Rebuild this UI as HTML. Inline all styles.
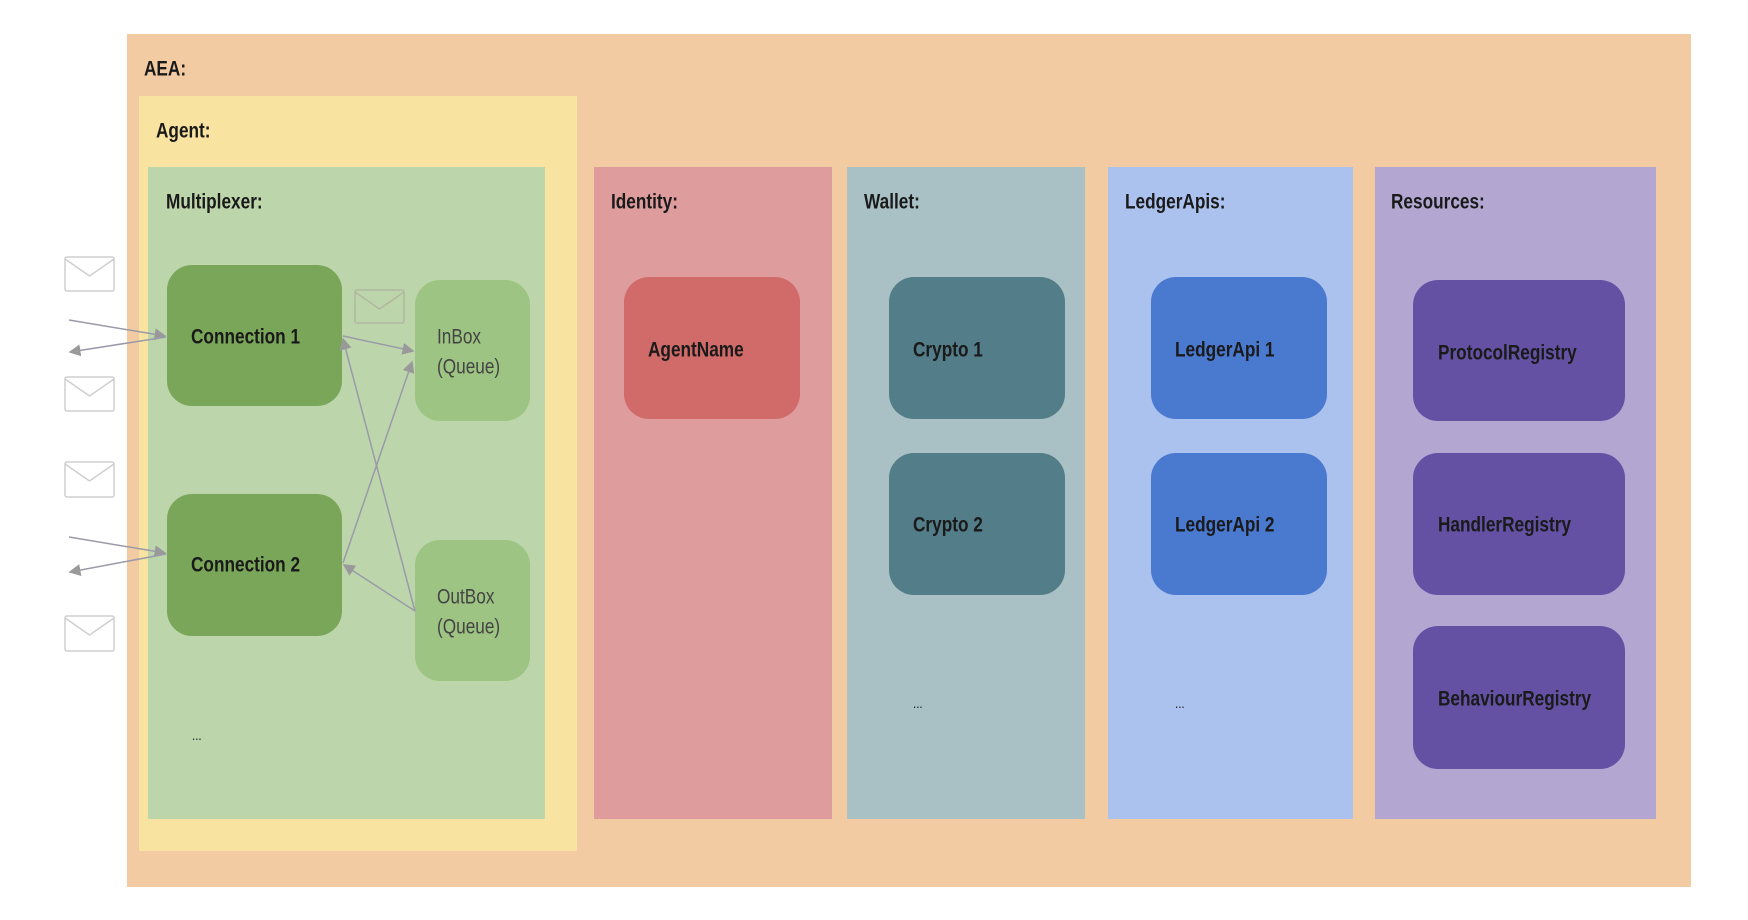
<!DOCTYPE html>
<html><head><meta charset="utf-8"><style>
body{margin:0;width:1748px;height:920px;background:#fff;position:relative;overflow:hidden;font-family:"Liberation Sans Narrow","Liberation Sans",sans-serif;}
div{position:absolute;box-sizing:border-box;}
.t{font-size:21px;color:#1a1a1a;white-space:nowrap;line-height:1;transform:translateY(-50%) scaleX(0.82);transform-origin:left center;}
.b{font-weight:bold;}
.r{border-radius:25px;}
</style></head><body>
<div style="left:127px;top:34px;width:1564px;height:853px;background:#f2cba3"></div>
<div style="left:139px;top:96px;width:438px;height:755px;background:#f9e3a1"></div>
<div style="left:148px;top:167px;width:397px;height:652px;background:#bdd5ab"></div>
<div style="left:594px;top:167px;width:238px;height:652px;background:#df9c9c"></div>
<div style="left:847px;top:167px;width:238px;height:652px;background:#a9c1c5"></div>
<div style="left:1108px;top:167px;width:245px;height:652px;background:#abc2ee"></div>
<div style="left:1375px;top:167px;width:281px;height:652px;background:#b3a7d2"></div>

<div class="r" style="left:167px;top:265px;width:175px;height:141px;background:#7aa65a"></div>
<div class="r" style="left:167px;top:494px;width:175px;height:142px;background:#7aa65a"></div>
<div class="r" style="left:415px;top:280px;width:115px;height:141px;background:#9dc483"></div>
<div class="r" style="left:415px;top:540px;width:115px;height:141px;background:#9dc483"></div>
<div class="r" style="left:624px;top:277px;width:176px;height:142px;background:#d06b69"></div>
<div class="r" style="left:889px;top:277px;width:176px;height:142px;background:#537d89"></div>
<div class="r" style="left:889px;top:453px;width:176px;height:142px;background:#537d89"></div>
<div class="r" style="left:1151px;top:277px;width:176px;height:142px;background:#4a79d0"></div>
<div class="r" style="left:1151px;top:453px;width:176px;height:142px;background:#4a79d0"></div>
<div class="r" style="left:1413px;top:280px;width:212px;height:141px;background:#6451a3"></div>
<div class="r" style="left:1413px;top:453px;width:212px;height:142px;background:#6451a3"></div>
<div class="r" style="left:1413px;top:626px;width:212px;height:143px;background:#6451a3"></div>

<svg style="position:absolute;left:0;top:0" width="1748" height="920">
<defs><marker id="a" markerWidth="8" markerHeight="8" refX="7" refY="4" orient="auto"><path d="M0,0 L8,4 L0,8 z" fill="#999"/></marker></defs>
<g stroke="#9a9aa8" stroke-width="1.5" fill="none">
<line x1="69" y1="320" x2="165" y2="336" marker-end="url(#a)"/>
<line x1="166" y1="337" x2="70" y2="352" marker-end="url(#a)"/>
<line x1="69" y1="537" x2="165" y2="553" marker-end="url(#a)"/>
<line x1="166" y1="554" x2="70" y2="572" marker-end="url(#a)"/>
<line x1="343" y1="336" x2="413" y2="351" marker-end="url(#a)"/>
<line x1="415" y1="611" x2="343" y2="339" marker-end="url(#a)"/>
<line x1="343" y1="563" x2="412" y2="362" marker-end="url(#a)"/>
<line x1="415" y1="611" x2="344" y2="565" marker-end="url(#a)"/>
</g>
<g stroke="#cfcfcf" stroke-width="1.5" fill="#fff">
<rect x="65" y="257" width="49" height="34" rx="2"/><path d="M65,259 L89.5,276 L114,259" fill="none"/>
<rect x="65" y="377" width="49" height="34" rx="2"/><path d="M65,379 L89.5,396 L114,379" fill="none"/>
<rect x="65" y="462" width="49" height="35" rx="2"/><path d="M65,464 L89.5,481 L114,464" fill="none"/>
<rect x="65" y="616" width="49" height="35" rx="2"/><path d="M65,618 L89.5,635 L114,618" fill="none"/>
</g>
<g stroke="#b0b8a0" stroke-width="1.5" fill="#bdd5ab">
<rect x="355" y="290" width="49" height="33" rx="2"/><path d="M355,292 L379.5,309 L404,292" fill="none"/>
</g>
</svg>

<div class="t b" style="left:144px;top:69px">AEA:</div>
<div class="t b" style="left:156px;top:131px">Agent:</div>
<div class="t b" style="left:166px;top:202px">Multiplexer:</div>
<div class="t b" style="left:611px;top:202px">Identity:</div>
<div class="t b" style="left:864px;top:202px">Wallet:</div>
<div class="t b" style="left:1125px;top:202px">LedgerApis:</div>
<div class="t b" style="left:1391px;top:202px">Resources:</div>

<div class="t b" style="left:191px;top:337px">Connection 1</div>
<div class="t b" style="left:191px;top:565px">Connection 2</div>
<div class="t" style="left:437px;top:337px;color:#444">InBox</div>
<div class="t" style="left:437px;top:367px;color:#444">(Queue)</div>
<div class="t" style="left:437px;top:597px;color:#444">OutBox</div>
<div class="t" style="left:437px;top:627px;color:#444">(Queue)</div>
<div class="t b" style="left:648px;top:350px">AgentName</div>
<div class="t b" style="left:913px;top:350px">Crypto 1</div>
<div class="t b" style="left:913px;top:525px">Crypto 2</div>
<div class="t b" style="left:1175px;top:350px">LedgerApi 1</div>
<div class="t b" style="left:1175px;top:525px">LedgerApi 2</div>
<div class="t b" style="left:1438px;top:353px">ProtocolRegistry</div>
<div class="t b" style="left:1438px;top:525px">HandlerRegistry</div>
<div class="t b" style="left:1438px;top:699px">BehaviourRegistry</div>
<div class="t" style="left:192px;top:735px;font-size:14px">...</div>
<div class="t" style="left:913px;top:703px;font-size:14px">...</div>
<div class="t" style="left:1175px;top:703px;font-size:14px">...</div>
</body></html>
